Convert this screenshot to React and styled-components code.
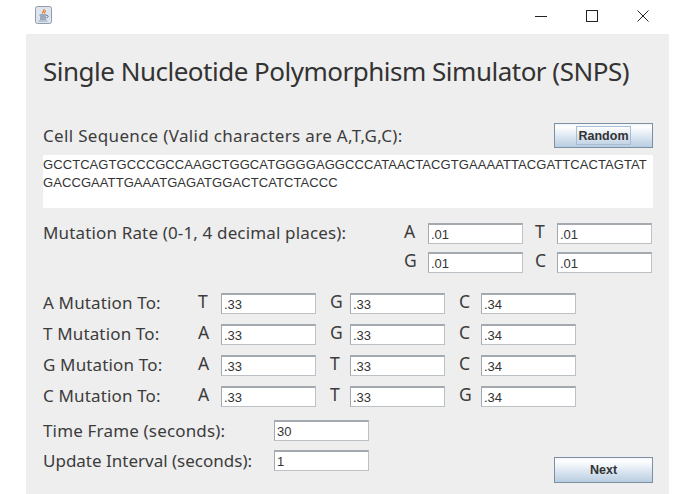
import React from "react";
import styled, { createGlobalStyle } from "styled-components";

const Global = createGlobalStyle`
  html, body { margin: 0; padding: 0; background: #ffffff; }
  body { width: 695px; height: 494px; overflow: hidden; font-family: "Noto Sans", "Open Sans", sans-serif; }
  * { box-sizing: border-box; }
`;

const Window = styled.div`
  width: 695px;
  height: 494px;
  display: flex;
  flex-direction: column;
  background: #fff;
`;
const TitleBar = styled.div`
  height: 34px;
  flex: none;
  display: flex;
  align-items: center;
  padding: 0 46px 2px 35px;
`;
const AppIcon = styled.svg`
  margin-bottom: 2px;
`;
const WindowControls = styled.div`
  margin-left: auto;
  display: flex;
  align-items: center;
  gap: 39px;
`;
const Panel = styled.div`
  margin: 0 26px;
  height: 460px;
  background: #eeeeee;
  padding: 0 16px 0 17px;
  display: flex;
  flex-direction: column;
`;
const Title = styled.h1`
  margin: 20px 0 0;
  height: 34px;
  font-size: 26px;
  letter-spacing: -0.5px;
  line-height: 34px;
  font-weight: 400;
  color: #333;
  white-space: nowrap;
`;
const SequenceHeader = styled.div`
  margin-top: 35px;
  height: 25px;
  display: flex;
  align-items: center;
  justify-content: space-between;
`;
const Label = styled.span`
  font-size: 17px;
  line-height: 22px;
  letter-spacing: ${(p) => p.$ls || 0}px;
  white-space: nowrap;
  width: ${(p) => (p.$w ? `${p.$w}px` : "auto")};
  flex: none;
  color: #3c3c3c;
`;
const RateLabel = styled(Label)`
  line-height: 19px;
`;
const Button = styled.button`
  width: 99px;
  height: ${(p) => p.$h}px;
  padding: 0;
  border: 1px solid #7d8fa3;
  background: linear-gradient(#f0f5fa 0%, #ffffff 12%, #dbe6f1 55%, #b9cde1 100%);
  font-family: "Liberation Sans", Arial, sans-serif;
  font-size: 12.5px;
  font-weight: 700;
  color: #333;
  display: flex;
  align-items: center;
  justify-content: center;
`;
const FocusText = styled.span`
  border: 1px solid #a9bdd2;
  width: 55px;
  height: 19px;
  text-align: center;
  line-height: 18px;
`;
const Sequence = styled.div`
  margin-top: 7px;
  width: 610px;
  height: 53px;
  background: #fff;
  padding: 1px 0 0;
  font-family: "Liberation Sans", Arial, sans-serif;
  font-size: 13px;
  letter-spacing: 0.08px;
  line-height: 18px;
  color: #333;
  white-space: nowrap;
`;
const RateSection = styled.div`
  margin-top: 15px;
  display: flex;
`;
const RateGrid = styled.div`
  margin-left: auto;
  margin-right: 1px;
  display: grid;
  grid-template-columns: 24px 95px 34px 95px;
  row-gap: 8px;
`;
const Letter = styled.span`
  font-size: 17.5px;
  line-height: 17px;
  height: 21px;
  padding-left: ${(p) => p.$pl || 0}px;
  color: #3c3c3c;
`;
const Field = styled.div`
  width: 95px;
  height: 21px;
  background: #fff;
  border-top: 2px solid #a3a9af;
  border-left: 1px solid #a3a9af;
  border-right: 1px solid #bcc1c6;
  border-bottom: 1px solid #bcc1c6;
  padding-left: 2px;
  font-family: "Liberation Sans", Arial, sans-serif;
  font-size: 13px;
  line-height: 20px;
  color: #333;
`;
const MutationList = styled.div`
  margin-top: 19px;
  display: flex;
  flex-direction: column;
  gap: 10px;
`;
const MutationRow = styled.div`
  display: grid;
  grid-template-columns: 155px 23px 95px 34px 95px 36px 95px;
  align-items: center;
  height: 21px;
`;
const FootRow = styled.div`
  margin-top: ${(p) => p.$mt}px;
  height: 21px;
  display: flex;
  align-items: center;
`;
const NextSlot = styled.div`
  margin-left: auto;
  margin-top: 18px;
`;

function JavaIcon() {
  return (
    <AppIcon width="17" height="18" viewBox="0 0 17 18">
      <rect x="0.5" y="0.5" width="16" height="17" rx="2" fill="#dfe5ec" stroke="#8e9cab" />
      <path d="M9 3c1 1.5-2 2.5-1.5 4.5M10.5 4.5c.5 1-1.5 1.5-1 3" fill="none" stroke="#e2762a" strokeWidth="1.2" />
      <path d="M4.5 9h7M5 11h6M5 13h6" stroke="#56718f" strokeWidth="1" />
      <path d="M11.5 9.5c2 -.5 2.5 1.5 0 2.5" fill="none" stroke="#56718f" />
      <path d="M3.5 15h9" stroke="#8ea0b2" strokeWidth="1" />
    </AppIcon>
  );
}

function Controls() {
  return (
    <WindowControls>
      <svg width="12" height="12" viewBox="0 0 12 12"><path d="M0 6.5h12" stroke="#222" strokeWidth="1" /></svg>
      <svg width="12" height="12" viewBox="0 0 12 12"><rect x="0.5" y="0.5" width="11" height="11" fill="none" stroke="#222" /></svg>
      <svg width="12" height="12" viewBox="0 0 12 12"><path d="M0.5 0.5l11 11M11.5 0.5l-11 11" stroke="#222" strokeWidth="1" /></svg>
    </WindowControls>
  );
}

const rows = [
  ["A Mutation To:", ["T", ".33"], ["G", ".33"], ["C", ".34"]],
  ["T Mutation To:", ["A", ".33"], ["G", ".33"], ["C", ".34"]],
  ["G Mutation To:", ["A", ".33"], ["T", ".33"], ["C", ".34"]],
  ["C Mutation To:", ["A", ".33"], ["T", ".33"], ["G", ".34"]],
];

export default function App() {
  return (
    <Window>
      <Global />
      <TitleBar>
        <JavaIcon />
        <Controls />
      </TitleBar>
      <Panel>
        <Title>Single Nucleotide Polymorphism Simulator (SNPS)</Title>
        <SequenceHeader>
          <Label $ls={0.33}>Cell Sequence (Valid characters are A,T,G,C):</Label>
          <Button $h={25}><FocusText>Random</FocusText></Button>
        </SequenceHeader>
        <Sequence>
          GCCTCAGTGCCCGCCAAGCTGGCATGGGGAGGCCCATAACTACGTGAAAATTACGATTCACTAGTAT
          <br />
          GACCGAATTGAAATGAGATGGACTCATCTACCC
        </Sequence>
        <RateSection>
          <RateLabel $ls={0.15}>Mutation Rate (0-1, 4 decimal places):</RateLabel>
          <RateGrid>
            <Letter>A</Letter><Field>.01</Field><Letter $pl={12}>T</Letter><Field>.01</Field>
            <Letter>G</Letter><Field>.01</Field><Letter $pl={12}>C</Letter><Field>.01</Field>
          </RateGrid>
        </RateSection>
        <MutationList>
          {rows.map(([name, a, b, c]) => (
            <MutationRow key={name}>
              <Label $ls={0.15}>{name}</Label>
              <Letter>{a[0]}</Letter><Field>{a[1]}</Field>
              <Letter $pl={14}>{b[0]}</Letter><Field>{b[1]}</Field>
              <Letter $pl={14}>{c[0]}</Letter><Field>{c[1]}</Field>
            </MutationRow>
          ))}
        </MutationList>
        <FootRow $mt={14}>
          <Label $w={231} $ls={0.17}>Time Frame (seconds):</Label>
          <Field>30</Field>
        </FootRow>
        <FootRow $mt={9}>
          <Label $w={231}>Update Interval (seconds):</Label>
          <Field>1</Field>
          <NextSlot><Button $h={26}>Next</Button></NextSlot>
        </FootRow>
      </Panel>
    </Window>
  );
}
